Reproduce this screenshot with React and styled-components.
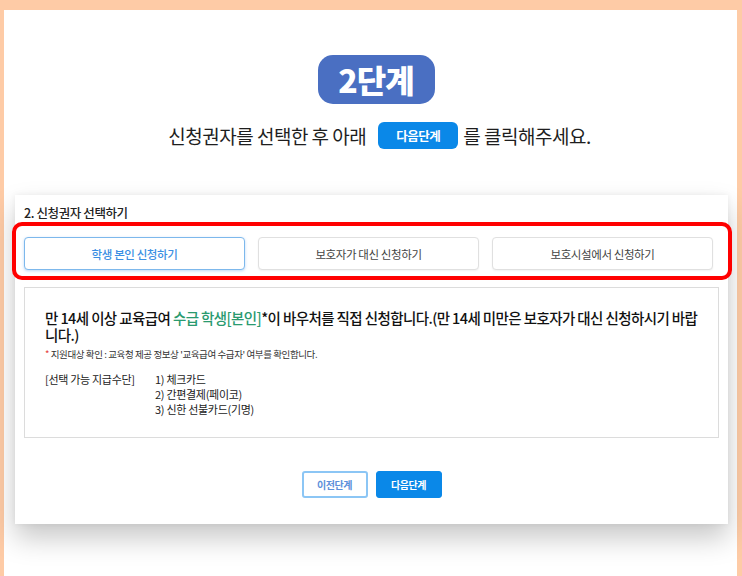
import React from "react";
import styled, { createGlobalStyle } from "styled-components";

const Global = createGlobalStyle`
  html, body { margin: 0; padding: 0; }
  body {
    background: #fecba6;
    font-family: "Noto Sans CJK KR", "Noto Sans", sans-serif;
    color: #222;
  }
  * { box-sizing: border-box; }
`;

const Frame = styled.div`
  width: 742px;
  height: 576px;
  padding: 10px 5px 0 4px;
  overflow: hidden;
`;

const Sheet = styled.div`
  background: #fff;
  height: 100%;
  display: flex;
  flex-direction: column;
  align-items: flex-start;
`;

const Hero = styled.div`
  align-self: stretch;
  display: flex;
  flex-direction: column;
  align-items: center;
  padding-top: 45px;
`;

const StepBadge = styled.div`
  width: 117px;
  height: 49px;
  margin-left: 11px;
  border-radius: 15px;
  background: #4a6fc2;
  color: #fff;
  font-size: 32px;
  font-weight: 900;
  letter-spacing: -1px;
  display: flex;
  align-items: center;
  justify-content: center;
  line-height: 1;
  padding-bottom: 2px;
`;

const Lead = styled.p`
  margin: 18px 0 0;
  display: flex;
  align-items: center;
  font-size: 19px;
  color: #1e1e1e;
  letter-spacing: -0.5px;
  margin-left: 18px;
`;

const InlineBtn = styled.span`
  display: inline-flex;
  align-items: center;
  justify-content: center;
  width: 80px;
  height: 27px;
  margin: 0 5px 0 12px;
  border-radius: 6px;
  background: #0a88e8;
  color: #fff;
  font-size: 12.5px;
  font-weight: 700;
  letter-spacing: -0.5px;
`;

const Card = styled.section`
  position: relative;
  margin: 46px 0 0 11px;
  width: 713px;
  background: #fff;
  padding: 10px 9px 26px 9px;
  box-shadow: 0 14px 26px rgba(0, 0, 0, 0.22), 0 0 6px rgba(0, 0, 0, 0.06);
`;

const CardTitle = styled.h3`
  margin: 0;
  font-size: 12.5px;
  font-weight: 500;
  color: #222;
  letter-spacing: -0.4px;
  line-height: 16px;
`;

const Tabs = styled.div`
  margin: 16px 6px 0 0;
  display: grid;
  grid-template-columns: repeat(3, 1fr);
  gap: 13px;
`;

const Tab = styled.button`
  height: 33px;
  border-radius: 4px;
  background: #fff;
  font-family: inherit;
  font-size: 11.5px;
  letter-spacing: -0.4px;
  cursor: pointer;
  border: 1px solid ${(p) => (p.$active ? "#7db8ec" : "#e0e0e0")};
  color: ${(p) => (p.$active ? "#3b8fe3" : "#444")};
  font-weight: ${(p) => (p.$active ? 500 : 400)};
  box-shadow: ${(p) =>
    p.$active ? "0 1px 3px rgba(60,140,230,0.35)" : "0 1px 2px rgba(0,0,0,0.06)"};
`;

const Highlight = styled.div`
  position: absolute;
  left: -3px;
  top: 27px;
  width: 720px;
  height: 58px;
  border: 4px solid #ff0000;
  border-radius: 10px;
  pointer-events: none;
`;

const InfoBox = styled.div`
  margin-top: 17px;
  border: 1px solid #dcdcdc;
  padding: 21px 20px 20px 20px;
  min-height: 151px;
`;

const Heading = styled.p`
  margin: 0;
  font-size: 14.5px;
  font-weight: 500;
  line-height: 17px;
  color: #111;
  letter-spacing: -0.6px;
`;

const Green = styled.span`
  color: #2a9a6f;
`;

const Note = styled.p`
  margin: 5px 0 0;
  font-size: 9.5px;
  line-height: 12px;
  color: #333;
  letter-spacing: -0.4px;
`;

const Red = styled.span`
  color: #e53935;
`;

const MethodRow = styled.div`
  margin-top: 12px;
  display: flex;
  font-size: 11px;
  line-height: 15px;
  color: #222;
  letter-spacing: -0.3px;
`;

const MethodLabel = styled.div`
  width: 110px;
`;

const MethodList = styled.ul`
  margin: 0;
  padding: 0;
  list-style: none;
`;

const Actions = styled.div`
  margin-top: 33px;
  display: flex;
  justify-content: center;
  gap: 8px;
`;

const ActionBtn = styled.button`
  width: 66px;
  height: 27px;
  border-radius: 3px;
  font-family: inherit;
  font-size: 10px;
  font-weight: 700;
  letter-spacing: -0.4px;
  cursor: pointer;
  background: ${(p) => (p.$primary ? "#0a88e8" : "#fff")};
  color: ${(p) => (p.$primary ? "#fff" : "#5c8fda")};
  border: ${(p) => (p.$primary ? "1px solid #0a88e8" : "2px solid #8cc6f5")};
`;

export default function App() {
  return (
    <>
      <Global />
      <Frame>
        <Sheet>
          <Hero>
            <StepBadge>2단계</StepBadge>
            <Lead>
              신청권자를 선택한 후 아래
              <InlineBtn>다음단계</InlineBtn>를 클릭해주세요.
            </Lead>
          </Hero>
          <Card>
            <CardTitle>2. 신청권자 선택하기</CardTitle>
            <Tabs>
              <Tab $active>학생 본인 신청하기</Tab>
              <Tab>보호자가 대신 신청하기</Tab>
              <Tab>보호시설에서 신청하기</Tab>
            </Tabs>
            <Highlight />
            <InfoBox>
              <Heading>
                만 14세 이상 교육급여 <Green>수급 학생[본인]</Green>*이 바우처를 직접
                신청합니다.(만 14세 미만은 보호자가 대신 신청하시기 바랍니다.)
              </Heading>
              <Note>
                <Red>*</Red> 지원대상 확인 : 교육청 제공 정보상 '교육급여 수급자' 여부를
                확인합니다.
              </Note>
              <MethodRow>
                <MethodLabel>[선택 가능 지급수단]</MethodLabel>
                <MethodList>
                  <li>1) 체크카드</li>
                  <li>2) 간편결제(페이코)</li>
                  <li>3) 신한 선불카드(기명)</li>
                </MethodList>
              </MethodRow>
            </InfoBox>
            <Actions>
              <ActionBtn>이전단계</ActionBtn>
              <ActionBtn $primary>다음단계</ActionBtn>
            </Actions>
          </Card>
        </Sheet>
      </Frame>
    </>
  );
}
